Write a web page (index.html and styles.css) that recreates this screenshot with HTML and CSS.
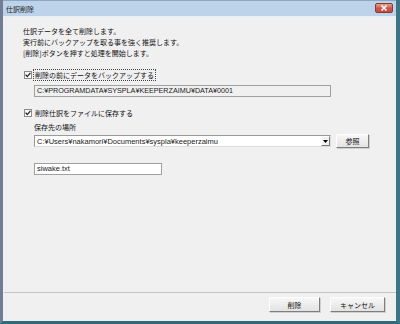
FILE: index.html
```html
<!DOCTYPE html>
<html lang="ja">
<head>
<meta charset="utf-8">
<link rel="stylesheet" href="styles.css">
</head>
<body>
<div class="window">
  <div class="titlebar">
    <span class="title">仕訳削除</span>
    <span class="close"><svg width="8" height="6" viewBox="0 0 8 6"><path d="M1.5 0.5 L6.5 5.5 M6.5 0.5 L1.5 5.5" stroke="#fff" stroke-width="1.5"/></svg></span>
  </div>
  <div class="client">
    <div class="content">
      <div class="intro">
        <div>仕訳データを全て削除します。</div>
        <div>実行前にバックアップを取る事を強く推奨します。</div>
        <div>[削除]ボタンを押すと処理を開始します。</div>
      </div>
      <div class="check first"><span class="box"><svg width="6" height="6" viewBox="0 0 6 6"><path d="M0.6 2.6 L2.3 4.6 L5.4 0.8" stroke="#222" stroke-width="1.3" fill="none"/></svg></span><span class="label focus">削除の前にデータをバックアップする</span></div>
      <div class="field readonly">C:¥PROGRAMDATA¥SYSPLA¥KEEPERZAIMU¥DATA¥0001</div>
      <div class="check second"><span class="box"><svg width="6" height="6" viewBox="0 0 6 6"><path d="M0.6 2.6 L2.3 4.6 L5.4 0.8" stroke="#222" stroke-width="1.3" fill="none"/></svg></span><span class="label">削除仕訳をファイルに保存する</span></div>
      <div class="caption">保存先の場所</div>
      <div class="row">
        <div class="combo"><span class="ctext">C:¥Users¥nakamori¥Documents¥syspla¥keeperzaimu</span><span class="drop"><svg width="5" height="3" viewBox="0 0 5 3"><path d="M0 0 H5 L2.5 3 Z" fill="#000"/></svg></span></div>
        <div class="btn small">参照</div>
      </div>
      <div class="field file">siwake.txt</div>
    </div>
    <div class="footer">
      <div class="btn wide">削除</div>
      <div class="btn wide2">キャンセル</div>
    </div>
  </div>
</div>
</body>
</html>
```

FILE: styles.css
```css
* { box-sizing: border-box; }
html, body { margin: 0; padding: 0; }
body {
  width: 400px;
  height: 324px;
  overflow: hidden;
  font-family: "Noto Sans CJK JP", "DejaVu Sans", sans-serif;
  font-size: 7px;
  color: #111;
  background: #6e7d90;
}
.window {
  width: 400px;
  height: 324px;
  display: flex;
  flex-direction: column;
  background: linear-gradient(#bdd3ea, #aac5e2);
  border-left: 3px solid #6f7e92;
  border-right: 4px solid #3e7586;
  border-bottom: 3px solid #2f6a7a;
}
.titlebar {
  height: 16px;
  flex: none;
  display: flex;
  align-items: center;
  justify-content: space-between;
  padding: 0 3px 0 3px;
  border-top: 1px solid #8ea6c0;
}
.title {
  font-size: 7px;
  color: #1e1e1e;
  line-height: 10px;
}
.close {
  width: 18px;
  height: 10px;
  display: flex;
  align-items: center;
  justify-content: center;
  background: linear-gradient(#e0a096, #c9584c 55%, #c04b3f);
  border: 1px solid #8a3a33;
  border-radius: 2px;
  margin-top: -1px;
}
.client {
  flex: 1;
  display: flex;
  flex-direction: column;
  background: #f0f0f0;
  border-top: 1px solid #e8eef6;
}
.content {
  flex: 1;
  padding: 9px 0 0 20px;
}
.intro {
  line-height: 11px;
}
.check {
  display: flex;
  align-items: center;
  height: 12px;
}
.check.first { margin-top: 10px; }
.check.second { margin-top: 10px; }
.box {
  width: 8px;
  height: 8px;
  margin-left: 1px;
  margin-right: 1px;
  display: flex;
  align-items: center;
  justify-content: center;
  background: linear-gradient(135deg, #f4f4f4, #ffffff);
  border: 1px solid #8c8c8c;
}
.label {
  padding: 0 1px;
  height: 12px;
  line-height: 10px;
  border: 1px solid transparent;
}
.label.focus { border: 1px dotted #444; }
.field {
  margin-left: 11px;
  height: 12px;
  line-height: 10px;
  padding: 0 2px;
  font-family: "Liberation Sans", "DejaVu Sans", sans-serif;
  font-size: 7.5px;
  border: 1px solid #a0a0a0;
  color: #222;
}
.readonly {
  width: 297px;
  margin-top: 4px;
  background: #f0f0f0;
  font-size: 7.2px;
}
.caption {
  margin-left: 11px;
  margin-top: 3px;
  line-height: 11px;
}
.row {
  margin-left: 11px;
  margin-top: 1px;
  height: 14px;
  display: flex;
  align-items: center;
}
.combo {
  width: 297px;
  height: 12px;
  display: flex;
  align-items: center;
  justify-content: space-between;
  background: #fff;
  border: 1px solid;
  border-color: #9a9a9a #dcdcdc #dcdcdc #9a9a9a;
  padding-left: 2px;
  font-family: "Liberation Sans", "DejaVu Sans", sans-serif;
  font-size: 7.5px;
  color: #222;
}
.drop {
  width: 9px;
  height: 10px;
  display: flex;
  align-items: center;
  justify-content: center;
  background: #f2f2f2;
  border: 1px solid;
  border-color: #fff #7a7a7a #7a7a7a #fff;
}
.btn {
  display: flex;
  align-items: center;
  justify-content: center;
  height: 14px;
  background: linear-gradient(#f7f7f7, #e3e3e3);
  border: 1px solid;
  border-color: #fdfdfd #7e7e7e #7e7e7e #fdfdfd;
  box-shadow: 1px 1px 0 #cfcfcf;
  font-size: 7px;
  color: #111;
}
.small {
  width: 33px;
  margin-left: 5px;
}
.file {
  width: 128px;
  margin-top: 15px;
  background: #fff;
}
.footer {
  flex: none;
  height: 29px;
  margin: 0 0 0 1px;
  border-top: 1px solid #c4c4c4;
  display: flex;
  justify-content: flex-end;
  align-items: flex-start;
  padding: 4px 11px 0 0;
  gap: 10px;
}
.wide { width: 51px; height: 15px; }
.wide2 { width: 55px; height: 15px; }
```
